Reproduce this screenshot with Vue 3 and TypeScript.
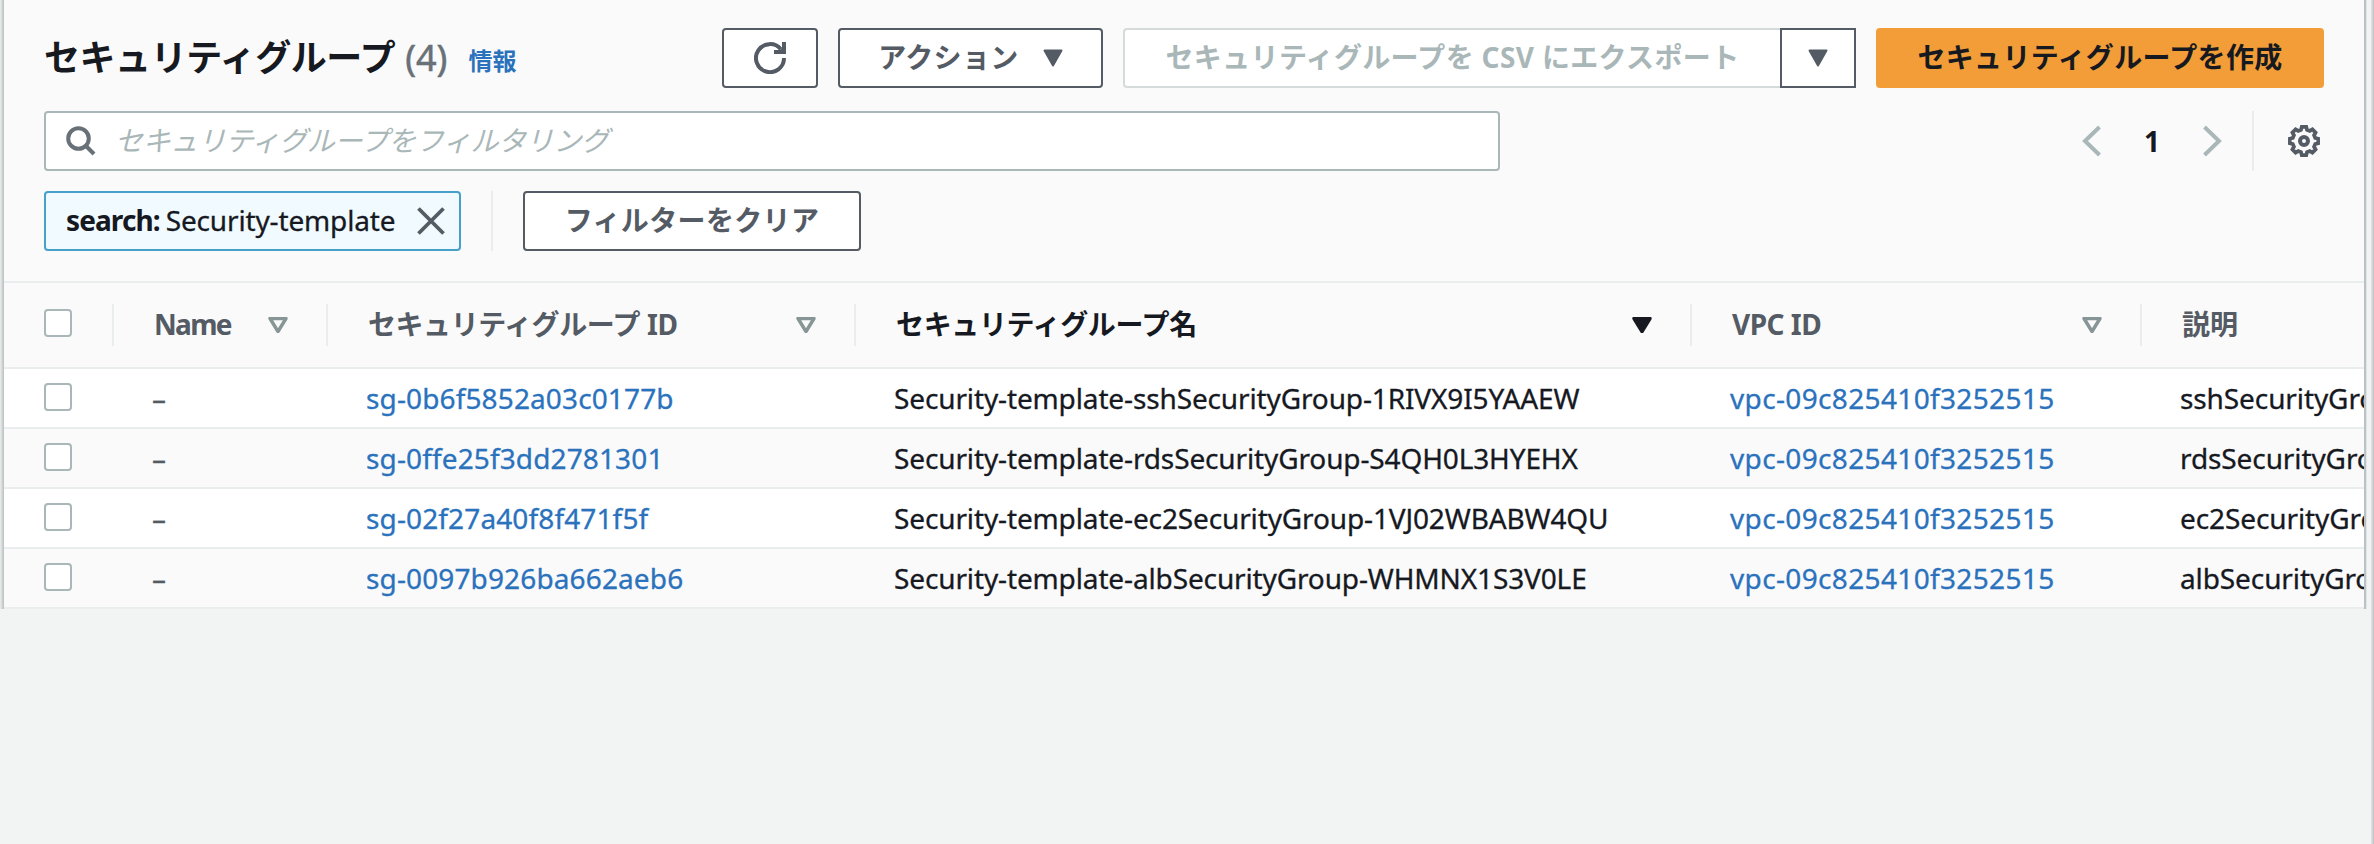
<script setup lang="ts">
interface Column {
  key: string
  label: string
  sort: 'none' | 'idle' | 'active'
}

interface SecurityGroup {
  id: string
  name: string
  vpc: string
  description: string
}

const columns: Column[] = [
  { key: 'tag', label: 'Name', sort: 'idle' },
  { key: 'id', label: 'セキュリティグループ ID', sort: 'idle' },
  { key: 'name', label: 'セキュリティグループ名', sort: 'active' },
  { key: 'vpc', label: 'VPC ID', sort: 'idle' },
  { key: 'desc', label: '説明', sort: 'none' },
]

const vpc = 'vpc-09c825410f3252515'

const groups: SecurityGroup[] = [
  { id: 'sg-0b6f5852a03c0177b', name: 'Security-template-sshSecurityGroup-1RIVX9I5YAAEW', vpc, description: 'sshSecurityGroup' },
  { id: 'sg-0ffe25f3dd2781301', name: 'Security-template-rdsSecurityGroup-S4QH0L3HYEHX', vpc, description: 'rdsSecurityGroup' },
  { id: 'sg-02f27a40f8f471f5f', name: 'Security-template-ec2SecurityGroup-1VJ02WBABW4QU', vpc, description: 'ec2SecurityGroup' },
  { id: 'sg-0097b926ba662aeb6', name: 'Security-template-albSecurityGroup-WHMNX1S3V0LE', vpc, description: 'albSecurityGroup' },
]

// Outline of the settings gear: eight teeth around a 32-unit box.
const gearPath = (() => {
  const points: string[] = []
  for (let i = 0; i < 8; i++) {
    const steps: [number, number][] = [[-15, 11.6], [-9, 14.3], [9, 14.3], [15, 11.6]]
    for (const [offset, radius] of steps) {
      const a = ((i * 45 + offset) * Math.PI) / 180
      points.push(`${(16 + radius * Math.sin(a)).toFixed(2)} ${(16 - radius * Math.cos(a)).toFixed(2)}`)
    }
  }
  return `M${points.join('L')}Z`
})()
</script>

<template>
  <div class="page">
    <section class="panel">
      <header class="tools">
        <div class="row heading">
          <h1>セキュリティグループ</h1>
          <span class="count">(4)</span>
          <a class="info">情報</a>
          <div class="actions">
            <button class="btn refresh" aria-label="refresh">
              <svg width="32" height="32" viewBox="0 0 32 32" fill="none" stroke="currentColor" stroke-width="4">
                <path d="M30 16A14 14 0 1 1 26.8 7.2" />
                <path d="M30 0V10H20" />
                <path d="M24 10L30 4V10Z" fill="currentColor" stroke="none" />
              </svg>
            </button>
            <button class="btn menu">
              アクション
              <svg class="caret" width="20" height="18" viewBox="0 0 20 18"><path d="M1.5 1.5H18.500L10 16.500Z" /></svg>
            </button>
            <div class="split">
              <button class="btn export">セキュリティグループを CSV にエクスポート</button>
              <button class="btn drop" aria-label="export options">
                <svg class="caret" width="20" height="18" viewBox="0 0 20 18"><path d="M1.5 1.5H18.500L10 16.500Z" /></svg>
              </button>
            </div>
            <button class="btn primary">セキュリティグループを作成</button>
          </div>
        </div>

        <div class="row filter">
          <div class="search">
            <svg width="30" height="30" viewBox="0 0 30 30" fill="none" stroke="#687078" stroke-width="4">
              <circle cx="12.500" cy="12.500" r="10.300" />
              <path d="M19.500 19.500L28 28" />
            </svg>
            <span class="placeholder">セキュリティグループをフィルタリング</span>
          </div>
          <nav class="pager">
            <svg width="20" height="32" viewBox="0 0 20 32"><path d="M17.500 2L3 16L17.500 30" /></svg>
            <b>1</b>
            <svg width="20" height="32" viewBox="0 0 20 32"><path d="M2.500 2L17 16L2.500 30" /></svg>
          </nav>
          <span class="rule"></span>
          <svg class="gear" width="32" height="32" viewBox="0 0 32 32" fill="none" stroke="#545b64">
            <path :d="gearPath" stroke-width="3.700" />
            <circle cx="16" cy="16" r="4" stroke-width="4" />
          </svg>
        </div>

        <div class="row tokens">
          <span class="token">
            <b>search:</b><span class="value">Security-template</span>
            <svg width="28" height="28" viewBox="0 0 28 28" fill="none" stroke="#545b64" stroke-width="3.800"><path d="M1.500 1.500L26.500 26.500M26.500 1.500L1.500 26.500" /></svg>
          </span>
          <span class="rule"></span>
          <button class="btn clear">フィルターをクリア</button>
        </div>
      </header>

      <div class="table">
        <div class="line head">
          <div class="cell check"><i class="box"></i></div>
          <div v-for="c in columns" :key="c.key" class="cell" :class="[c.key, { sorted: c.sort === 'active' }]">
            <span class="label">{{ c.label }}</span>
            <svg v-if="c.sort !== 'none'" class="sort" :class="c.sort" width="20" height="16" viewBox="0 0 20 16">
              <path d="M2 1.500H18L10 14.500Z" />
            </svg>
          </div>
        </div>
        <div v-for="g in groups" :key="g.id" class="line data">
          <div class="cell check"><i class="box"></i></div>
          <div class="cell tag">–</div>
          <div class="cell id"><a>{{ g.id }}</a></div>
          <div class="cell name">{{ g.name }}</div>
          <div class="cell vpc"><a>{{ g.vpc }}</a></div>
          <div class="cell desc">{{ g.description }}</div>
        </div>
      </div>
    </section>
    <div class="edge"></div>
  </div>
</template>

<style>
body {
  background: #f2f4f3;
}
</style>

<style scoped>
.page {
  display: flex;
  width: 2374px;
  height: 844px;
  overflow: hidden;
  background: #f2f4f3;
  color: #16191f;
  font: 28px/36px "Noto Sans", "Noto Sans CJK JP", sans-serif;
}
.page * {
  box-sizing: border-box;
}
.panel {
  width: 2367px;
  height: 609px;
  padding: 0 3px 0 4px;
  background: linear-gradient(90deg, #eceeee 0, #dfe2e2 1px, #d4d7d7 2px, #b9bebe 4px, #b9bebe 5px, transparent 5px),
    linear-gradient(270deg, #e4e8e8 0, #dfe3e3 1px, #b9c2c4 1px, #b9c2c4 3px, transparent 3px);
  overflow: hidden;
}
.edge {
  width: 3px;
  margin-left: 4px;
  background: linear-gradient(90deg, #e3e5e5, #bec2c2);
}
.tools {
  height: 281px;
  padding: 28px 40px 0;
  background: #fafafa;
}
.row {
  display: flex;
  height: 60px;
  align-items: center;
}
h1 {
  margin: 0;
  font-size: 36px;
  line-height: 44px;
  font-weight: 700;
  letter-spacing: -0.45px;
  white-space: nowrap;
}
.count {
  margin-left: 10px;
  color: #687078;
  font-size: 36px;
  -webkit-text-stroke: 0.5px currentColor;
}
.info {
  margin: 6px 0 0 21px;
  color: #2b72bd;
  font-size: 24px;
  font-weight: 700;
}
.actions {
  display: flex;
  gap: 20px;
  margin-left: auto;
}
.btn {
  display: flex;
  align-items: center;
  justify-content: center;
  height: 60px;
  margin: 0;
  padding: 0 0 2px;
  border: 2px solid #545b64;
  border-radius: 4px;
  background: #fff;
  color: #545b64;
  font: 700 28px/36px "Noto Sans", "Noto Sans CJK JP", sans-serif;
  letter-spacing: 0.35px;
  white-space: nowrap;
}
.refresh {
  width: 96px;
  padding: 0;
}
.menu {
  width: 265px;
  gap: 24px;
}
.caret {
  position: relative;
  top: 1px;
  fill: currentColor;
  stroke: currentColor;
  stroke-width: 2;
  stroke-linejoin: round;
}
.split {
  display: flex;
}
.export {
  width: 657px;
  border-color: #d5dbdb;
  border-right: 0;
  border-radius: 4px 0 0 4px;
  color: #aab7b8;
}
.drop {
  width: 76px;
  border-radius: 0;
}
.primary {
  width: 448px;
  border-color: #f29d38;
  background: #f29d38;
  color: #16191f;
}
.filter {
  margin-top: 23px;
}
.search {
  display: flex;
  align-items: center;
  width: 1456px;
  height: 60px;
  padding-left: 20px;
  border: 2px solid #aab7b8;
  border-radius: 4px;
  background: #fff;
}
.placeholder {
  margin: -3px 0 0 19px;
  color: #aab7b8;
  font-style: italic;
  letter-spacing: -0.35px;
}
.pager {
  display: flex;
  align-items: center;
  margin-left: auto;
}
.pager svg {
  fill: none;
  stroke: #aab7b8;
  stroke-width: 4;
}
.pager b {
  width: 100px;
  text-align: center;
}
.rule {
  width: 2px;
  height: 60px;
  background: #eaeded;
}
.filter .rule {
  margin: 0 34px 0 30px;
}
.gear {
  margin-right: 4px;
}
.tokens {
  margin-top: 20px;
}
.token {
  display: flex;
  align-items: center;
  width: 417px;
  height: 60px;
  padding: 0 14px 0 20px;
  border: 2px solid #45a0ca;
  border-radius: 4px;
  background: #f1faff;
}
.token b,
.token .value {
  margin-top: -2px;
}
.token b {
  letter-spacing: -0.9px;
}
.token .value {
  margin-left: 6px;
  letter-spacing: -0.15px;
  -webkit-text-stroke: 0.3px currentColor;
}
.token svg {
  margin-left: auto;
}
.tokens .rule {
  margin: 0 30px;
}
.clear {
  width: 338px;
}
.table {
  background: #fff;
}
.line {
  display: grid;
  grid-template-columns: 110px 214px 528px 836px 450px 222px;
  height: 60px;
  border-bottom: 2px solid #eaeded;
}
.line:nth-child(odd) {
  background: #fafafa;
}
.head {
  height: 88px;
  border-top: 2px solid #eaeded;
  color: #545b64;
  font-weight: 700;
}
.cell {
  display: flex;
  align-items: center;
  min-width: 0;
  padding-left: 38px;
  overflow: hidden;
  white-space: nowrap;
}
.data .cell {
  -webkit-text-stroke: 0.3px currentColor;
}
.head .cell {
  justify-content: space-between;
  height: 42px;
  margin-top: 21px;
  padding: 0 38px 0 40px;
  border-right: 2px solid #eaeded;
}
.head .cell.desc {
  padding-right: 0;
  border-right: 0;
}
.line .check {
  padding: 0 0 0 40px;
}
.data .check {
  padding-bottom: 3px;
}
.head .check .box {
  margin-top: -4px;
}
.box {
  display: block;
  width: 28px;
  height: 28px;
  border: 2px solid #aab7b8;
  border-radius: 4px;
  background: #fff;
}
.label {
  margin-top: -2px;
}
.head .tag .label {
  letter-spacing: -1.7px;
}
.head .id .label {
  letter-spacing: -0.45px;
}
.head .name .label {
  letter-spacing: -0.35px;
}
.head .vpc .label {
  letter-spacing: -0.5px;
}
.sorted {
  color: #16191f;
}
.sort {
  stroke: #879596;
  stroke-width: 3.4;
  stroke-linejoin: round;
  fill: none;
}
.sort.active {
  fill: #16191f;
  stroke: #16191f;
}
.data .tag {
  color: #545b64;
}
.data .id {
  letter-spacing: 0.13px;
}
.data .name {
  letter-spacing: -0.13px;
}
.data .vpc {
  letter-spacing: 0.35px;
}
.data .desc {
  letter-spacing: -0.1px;
}
.data a {
  color: #2b72bd;
}
</style>
